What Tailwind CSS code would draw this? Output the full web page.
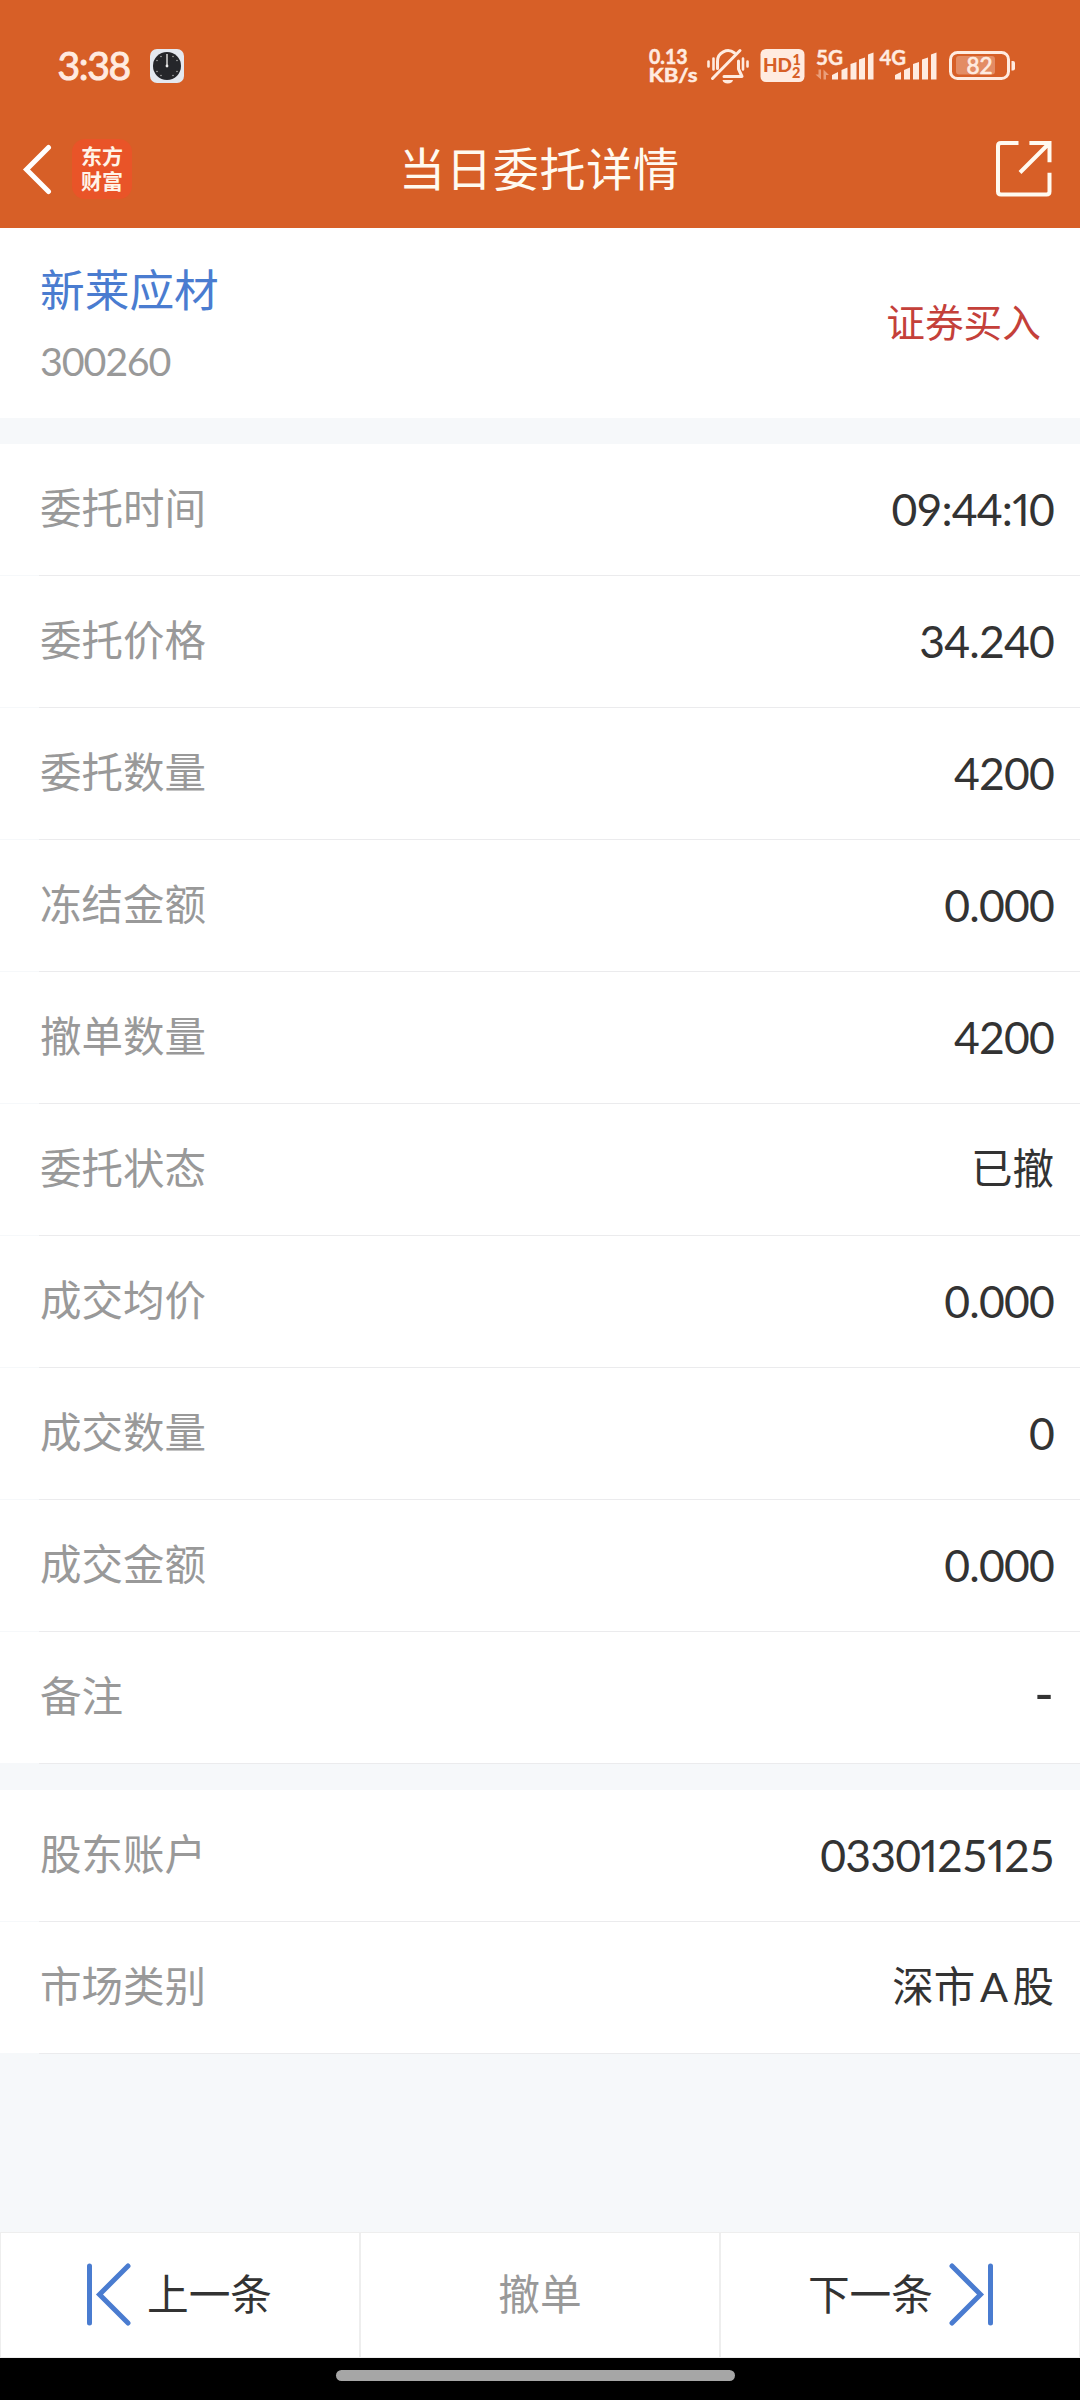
<!DOCTYPE html>
<html lang="zh-CN">
<head>
<meta charset="utf-8">
<title>当日委托详情</title>
<script src="https://cdn.jsdelivr.net/npm/@tailwindcss/browser@4"></script>
</head>
<body class="w-[1080px] h-[2400px] overflow-hidden bg-[#f6f8fa] flex flex-col font-['Lato','Noto_Sans_CJK_SC',sans-serif] text-[#333333]">

<header class="h-[228px] shrink-0 bg-[#d75f27] flex flex-col">
  <div class="h-[110px] flex">
    <svg width="1080" height="110" viewBox="0 0 1080 110" fill="#ffebe0">
      <text x="57.500" y="79.500" font-size="39" font-weight="400" stroke="#ffebe0" stroke-width="1" textLength="73.500">3:38</text>
      <!-- clock app -->
      <rect x="150" y="49" width="34" height="34" rx="7" fill="#e4e8ef"/>
      <circle cx="167" cy="66" r="14" fill="#25262a"/>
      <path d="M167 54v12" stroke="#aaa" stroke-width="2"/>
      <circle cx="167" cy="66" r="1.4" fill="#eee"/>
      <g fill="#aaa"><circle cx="157" cy="60.500" r=".8"/><circle cx="161" cy="56.500" r=".8"/><circle cx="173" cy="56.500" r=".8"/><circle cx="177" cy="60.500" r=".8"/><circle cx="157" cy="71.500" r=".8"/><circle cx="161" cy="75.500" r=".8"/><circle cx="173" cy="75.500" r=".8"/><circle cx="177" cy="71.500" r=".8"/></g>
      <!-- network speed -->
      <g font-weight="700" stroke="#ffebe0" stroke-width=".5">
        <text x="649" y="64" font-size="21" textLength="38.500" lengthAdjust="spacingAndGlyphs">0.13</text>
        <text x="648.500" y="82" font-size="19.500" textLength="49" lengthAdjust="spacingAndGlyphs">KB/s</text>
      </g>
      <!-- muted bell -->
      <g fill="none" stroke="#ffebe0" stroke-width="3" stroke-linecap="round" stroke-linejoin="round">
        <path d="M717.500 68.500V61.500a10.500 10.500 0 0 1 17-8.500M738.500 61v8l3.500 7.500H724"/>
        <path d="M712.500 78.500L740 50.500"/>
        <path d="M708.500 61.500v5M713.500 58.500v11M743 58.500v11M747.500 61.500v5" stroke-width="2.600"/>
      </g>
      <path d="M722.500 80h10.500a5.300 4 0 0 1-10.500 0z"/>
      <!-- HD badge -->
      <rect x="760.500" y="49" width="44" height="33" rx="5.500"/>
      <g fill="#d75f27" font-weight="900">
        <text x="763" y="72" font-size="19.500" textLength="29" lengthAdjust="spacingAndGlyphs">HD</text>
        <text x="792.500" y="64.500" font-size="14.500">1</text>
        <text x="792" y="77.500" font-size="14.500">2</text>
      </g>
      <!-- 5G -->
      <text x="816" y="64.500" font-size="20.500" font-weight="700" stroke="#ffebe0" stroke-width=".4" textLength="27" lengthAdjust="spacingAndGlyphs">5G</text>
      <path d="M815.500 74.500h3V69.500h2.500v10zM823.500 69.500l5.500 5.500h-3v4.500h-2.500z" opacity=".45"/>
      <path d="M832 79.500V75l6-3v7.500zM841.500 79.500V70l6-2.500v12zM850.500 79.500V64l6-2v17.500zM859 79.500V59.500l6-2v22zM868 79.500V54.500l5.500-2v27z"/>
      <!-- 4G -->
      <text x="879.500" y="64.500" font-size="20.500" font-weight="700" stroke="#ffebe0" stroke-width=".4" textLength="26.500" lengthAdjust="spacingAndGlyphs">4G</text>
      <path d="M895 79.500V75l6-3v7.500zM904 79.500V70l6-2.500v12zM913 79.500V64l6-2v17.500zM922 79.500V59.500l6-2v22zM931 79.500V54.500l5.500-2v27z"/>
      <!-- battery -->
      <rect x="950.500" y="52.500" width="58" height="26" rx="7" fill="none" stroke="#ffebe0" stroke-width="3"/>
      <rect x="956" y="56" width="39" height="18.500" rx="3" fill="#e38c64"/>
      <path d="M1011.500 61h1.500q2 0 2 2v5.500q0 2-2 2h-1.500z"/>
      <text x="966.500" y="74" font-size="22.500" font-weight="400" stroke="#ffebe0" stroke-width=".7" textLength="26">82</text>
    </svg>
  </div>
  <div class="h-[118px] flex items-center justify-between pl-5 pr-[28px]">
    <div class="w-[202px] flex items-center gap-[20px]">
      <svg width="32" height="52" viewBox="0 0 32 52" fill="none" stroke="#fff" stroke-width="5" stroke-linecap="round"><path d="M28.500 4.500L6.500 26.500L28.500 48.500"/></svg>
      <div class="w-[60px] h-[60px] rounded-[13px] bg-[#e95428] flex flex-col items-center justify-center text-[21px] leading-[25px] font-bold text-[#fff4e8] pb-[3px]">
        <span>东方</span><span>财富</span>
      </div>
    </div>
    <h1 class="text-[46px] leading-none tracking-[0.800px] text-[#fffaf0] pl-[37px]">当日委托详情</h1>
    <div class="w-[232px] flex justify-end">
      <svg width="60" height="60" viewBox="0 0 60 60" fill="none" stroke="#fffaf0" stroke-width="4"><path d="M26.500 4H9Q6 4 6 7V52.500Q6 55.500 9 55.500H54.500Q57.500 55.500 57.500 52.500V33.700M37.400 4H57.500V23.300M57 4.500L28 33.500"/></svg>
    </div>
  </div>
</header>

<main class="grow flex flex-col">
  <section class="h-[190px] bg-white flex items-center justify-between pl-[40px] pr-[39px]">
    <div class="flex flex-col pb-0.5">
      <span class="text-[44.7px] leading-[60px] text-[#4a7cd0]">新莱应材</span>
      <span class="text-[39.500px] leading-[48px] mt-[17px] text-[#999999] tracking-[-1.200px]">300260</span>
    </div>
    <span class="text-[38.7px] leading-none text-[#c4403a] pb-px">证券买入</span>
  </section>

  <section id="order" class="mt-[26px] flex flex-col"></section>
  <section id="account" class="mt-[26px] flex flex-col"></section>
</main>

<nav class="h-[126px] shrink-0 grid grid-cols-3 text-[41.700px] leading-none bg-white border-t border-[#eeeeee]">
  <div class="border-x border-b border-[#eeeeee] flex items-center pl-[84px]">
    <svg width="48" height="66" viewBox="0 0 48 66" fill="none" stroke="#4a7cd0" stroke-width="5" stroke-linecap="round"><path d="M4.500 4v57M43 4L14.500 32.500L43 61"/></svg>
    <span class="ml-[14px]">上一条</span>
  </div>
  <div class="border-x border-b border-[#eeeeee] flex items-center justify-center text-[#999999]"><span>撤单</span></div>
  <div class="border-x border-b border-[#eeeeee] flex items-center justify-end pr-[84px]">
    <span class="mr-[14px]">下一条</span>
    <svg width="48" height="66" viewBox="0 0 48 66" fill="none" stroke="#4a7cd0" stroke-width="5" stroke-linecap="round"><path d="M43.500 4v57M5 4L33.500 32.500L5 61"/></svg>
  </div>
</nav>
<div class="h-[42px] shrink-0 bg-black flex justify-center pt-[12px] pr-[9px]"><div class="w-[399px] h-[11px] rounded-full bg-[#a6a6a6]"></div></div>

<script>
const row = ([label, value, cls]) => `
  <div class="h-[132px] flex flex-col">
    <div class="grow bg-white flex items-center justify-between pl-[40px] pr-[26px]">
      <span class="text-[41.500px] leading-none text-[#999999] pb-px">${label}</span>
      <span class="leading-none ${cls}">${value}</span>
    </div>
    <div class="h-px ml-[39px] bg-[#ebebed]"></div>
  </div>`;
const num = 'text-[44.500px] tracking-[-0.800px] tabular-nums';
const cjk = 'text-[41.500px] pb-px';
const one = '<span class="proportional-nums">1</span>';
const n = s => s.replaceAll('1', one);
document.getElementById('order').innerHTML = [
  ['委托时间', n('09:44:10'), num],
  ['委托价格', '34.240', num],
  ['委托数量', '4200', num],
  ['冻结金额', '0.000', num],
  ['撤单数量', '4200', num],
  ['委托状态', '已撤', cjk],
  ['成交均价', '0.000', num],
  ['成交数量', '0', num],
  ['成交金额', '0.000', num],
  ['备注', '-', 'text-[54px] pb-[10px]'],
].map(row).join('');
document.getElementById('account').innerHTML = [
  ['股东账户', n('0330125125'), num],
  ['市场类别', '深市<span class="mx-[4.500px]">A</span>股', cjk],
].map(row).join('');
</script>
</body>
</html>
